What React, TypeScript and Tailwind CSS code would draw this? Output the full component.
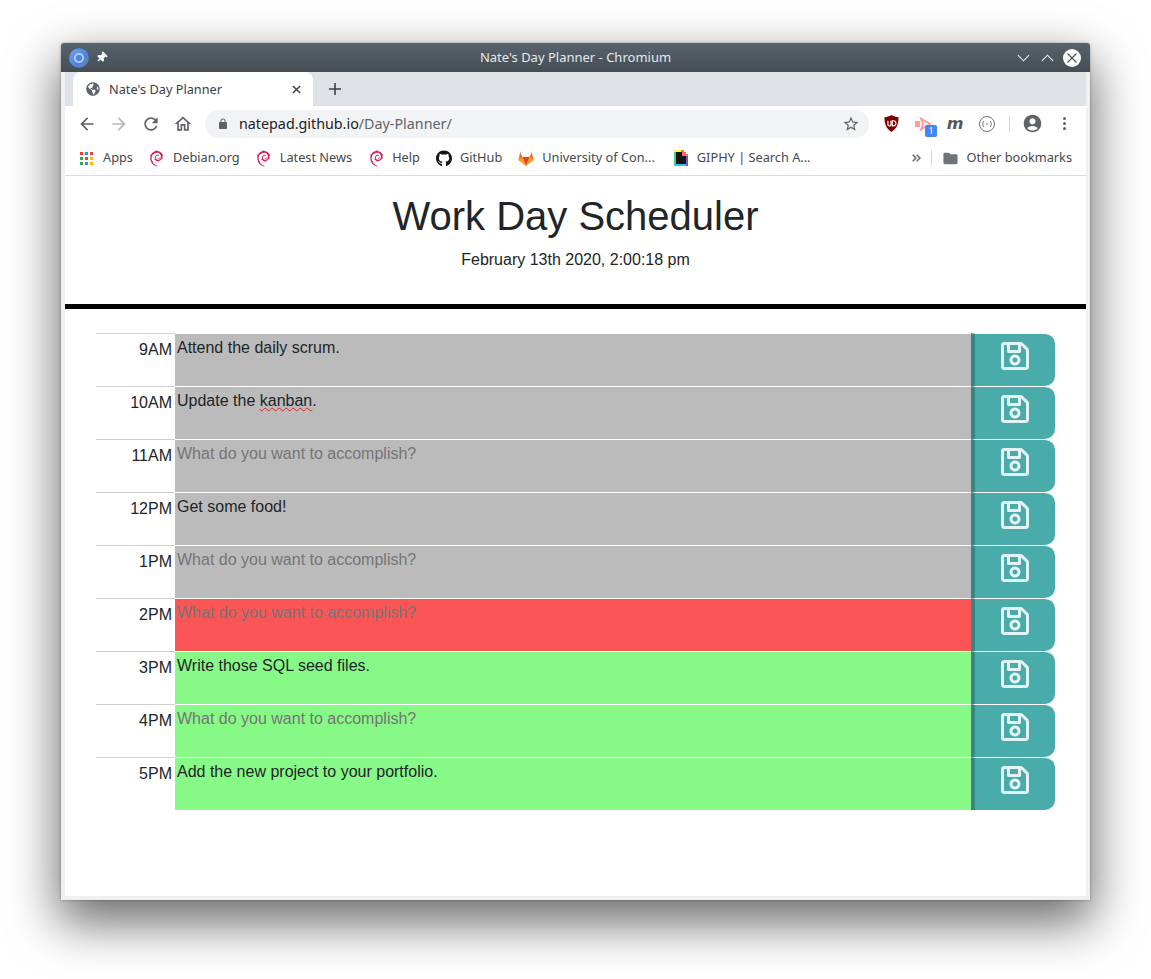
import { FaRegSave, FaGithub, FaGlobeAmericas, FaThumbtack } from "react-icons/fa"
import { MdAccountCircle, MdFolder } from "react-icons/md"
import { SiDebian } from "react-icons/si"

const rows = [
  { hour: "9AM", text: "Attend the daily scrum.", bg: "bg-[#bbbbbb]" },
  { hour: "10AM", text: "kanban", bg: "bg-[#bbbbbb]" },
  { hour: "11AM", bg: "bg-[#bbbbbb]" },
  { hour: "12PM", text: "Get some food!", bg: "bg-[#bbbbbb]" },
  { hour: "1PM", bg: "bg-[#bbbbbb]" },
  { hour: "2PM", bg: "bg-[#fc5555]" },
  { hour: "3PM", text: "Write those SQL seed files.", bg: "bg-[#86f986]" },
  { hour: "4PM", bg: "bg-[#86f986]" },
  { hour: "5PM", text: "Add the new project to your portfolio.", bg: "bg-[#86f986]" },
]

function Mat({ d, className }: { d: string; className: string }) {
  return (
    <svg viewBox="0 0 24 24" className={className} fill="currentColor">
      <path d={d} />
    </svg>
  )
}

function AppsGrid() {
  const colors = ["#ea4335", "#4285f4", "#ea4335", "#34a853", "#ea4335", "#fbbc04", "#34a853", "#4285f4", "#fbbc04"]
  return (
    <div className="grid w-[13px] grid-cols-3 gap-[2px]">
      {colors.map((c, i) => (
        <svg key={i} viewBox="0 0 3 3" className="h-[3px] w-[3px]">
          <rect width="3" height="3" fill={c} />
        </svg>
      ))}
    </div>
  )
}

function Chromium() {
  return (
    <svg viewBox="0 0 20 20" className="h-[20px] w-[20px]">
      <defs>
        <linearGradient id="chromium-rim" x1="0" y1="0" x2="1" y2="1">
          <stop offset="0" stopColor="#6fa4f7" />
          <stop offset="0.55" stopColor="#4f86e6" />
          <stop offset="1" stopColor="#6f7f96" />
        </linearGradient>
      </defs>
      <circle cx="10" cy="10" r="9.8" fill="url(#chromium-rim)" />
      <circle cx="10" cy="10" r="5" fill="#bcd2f7" />
      <circle cx="10" cy="10" r="3.3" fill="#4f86e6" />
    </svg>
  )
}

function Gitlab() {
  return (
    <svg viewBox="0 0 20 18" className="h-[17px] w-[18px]">
      <path d="M10 18 L0.6 11 L2.8 1 L5.6 7 H14.4 L17.2 1 L19.4 11 Z" fill="#fc6d26" />
      <path d="M10 18 L5.6 7 H14.4 Z" fill="#e24329" />
      <path d="M10 18 L0.6 11 L5.6 7 Z" fill="#fca326" />
      <path d="M10 18 L19.4 11 L14.4 7 Z" fill="#fca326" />
    </svg>
  )
}

function Giphy() {
  return (
    <svg viewBox="0 0 14 16" className="h-[16px] w-[14px]">
      <rect x="0" y="0" width="2" height="16" fill="#3fd28c" />
      <rect x="0" y="0" width="7" height="2" fill="#fff35c" />
      <rect x="0" y="14" width="14" height="2" fill="#2cc5ee" />
      <rect x="12" y="4" width="2" height="12" fill="#7d4fc4" />
      <path d="M7 0 h3 v2 h2 v2 h2 v2 h-7z" fill="#ff6666" />
      <path d="M2 2 h6 v4 h4 v8 H2z" fill="#141414" />
    </svg>
  )
}

function UBlock() {
  return (
    <svg viewBox="0 0 16 18" className="h-[17px] w-[15px]">
      <path d="M8 0 C5.5 1.5 3 2.2 0.5 2.4 C0.5 9 2 14.5 8 18 C14 14.5 15.5 9 15.5 2.4 C13 2.2 10.5 1.5 8 0Z" fill="#800000" />
      <path d="M4.2 6 v4 a1.6 1.6 0 0 0 3.2 0 v-4 M8.8 6 v5.5 h1.2 a2.7 2.7 0 0 0 0-5.5z" fill="none" stroke="#fff" strokeWidth="1.2" />
    </svg>
  )
}

function Bookmark({ icon, label }: { icon: React.ReactNode; label: string }) {
  return (
    <div className="flex items-center gap-[8px] whitespace-nowrap">
      <div className="flex w-[16px] justify-center">{icon}</div>
      <span>{label}</span>
    </div>
  )
}

export default function App() {
  const debian = <SiDebian className="h-[17px] w-[15px] text-[#cf0d4f]" stroke="currentColor" strokeWidth={0.7} />
  return (
    <div className="h-[979px] w-[1151px] overflow-hidden bg-white pl-[61px] pt-[43px]">
      <div className="flex h-[857px] w-[1029px] flex-col rounded-t-[3px] bg-[#eff0f1] shadow-[0_20px_50px_3px_rgba(0,0,0,0.58),0_0_3px_rgba(0,0,0,0.3)]">
        {/* Window title bar */}
        <div className="flex h-[29px] shrink-0 items-center rounded-t-[3px] bg-gradient-to-b from-[#59636c] to-[#444d54] pl-[8px] pr-[9px] font-['Noto_Sans',sans-serif] text-[13px] text-[#e6e8ea]">
          <Chromium />
          <FaThumbtack className="ml-[7px] h-[11px] w-[11px] rotate-45 text-white" />
          <div className="flex-1 pl-[27px] text-center">Nate's Day Planner - Chromium</div>
          <svg viewBox="0 0 14 8" className="mr-[11px] h-[8px] w-[13px]" fill="none" stroke="#eceef0" strokeWidth="1.2">
            <path d="M1 1 L7 7 L13 1" />
          </svg>
          <svg viewBox="0 0 14 8" className="mr-[9px] h-[8px] w-[13px]" fill="none" stroke="#eceef0" strokeWidth="1.2">
            <path d="M1 7 L7 1 L13 7" />
          </svg>
          <div className="flex h-[18px] w-[18px] items-center justify-center rounded-full bg-white">
            <svg viewBox="0 0 10 10" className="h-[10px] w-[10px]" fill="none" stroke="#454e55" strokeWidth="1.1">
              <path d="M0.5 0.5 L9.5 9.5 M9.5 0.5 L0.5 9.5" />
            </svg>
          </div>
        </div>

        {/* Browser */}
        <div className="mx-[4px] flex flex-1 flex-col bg-white font-['Noto_Sans',sans-serif] text-[12.75px] text-[#5f6368]">
          <div className="flex h-[34px] shrink-0 items-end bg-[#dee1e6] pl-[8px]">
            <div className="flex h-[34px] w-[240px] items-center rounded-t-[8px] bg-white pl-[13px] pr-[12px] text-[#3c4043]">
              <FaGlobeAmericas className="h-[14px] w-[14px] text-[#5f6368]" />
              <span className="ml-[9px] flex-1 pt-[1px]">Nate's Day Planner</span>
              <svg viewBox="0 0 10 10" className="h-[9px] w-[9px]" fill="none" stroke="#3c4043" strokeWidth="1.6">
                <path d="M1 1 L9 9 M9 1 L1 9" />
              </svg>
            </div>
            <svg viewBox="0 0 12 12" className="mb-[11px] ml-[16px] h-[12px] w-[12px]" fill="none" stroke="#3c4043" strokeWidth="1.6">
              <path d="M6 0 V12 M0 6 H12" />
            </svg>
          </div>

          <div className="flex h-[35px] shrink-0 items-center pl-[12px] text-[#5f6368]">
            <Mat className="h-[20px] w-[20px]" d="M20 11H7.83l5.59-5.59L12 4l-8 8 8 8 1.41-1.41L7.83 13H20v-2z" />
            <Mat className="ml-[12px] h-[20px] w-[20px] text-[#b5b8bc]" d="M12 4l-1.41 1.41L16.17 11H4v2h12.17l-5.58 5.59L12 20l8-8z" />
            <Mat className="ml-[12px] h-[20px] w-[20px]" d="M17.65 6.35C16.2 4.9 14.21 4 12 4c-4.42 0-7.99 3.58-7.99 8s3.57 8 7.99 8c3.73 0 6.84-2.55 7.73-6h-2.08c-.82 2.33-3.04 4-5.65 4-3.31 0-6-2.69-6-6s2.69-6 6-6c1.66 0 3.14.69 4.22 1.78L13 11h7V4l-2.35 2.35z" />
            <Mat className="ml-[12px] h-[20px] w-[20px]" d="M12 5.69l5 4.5V18h-2v-6H9v6H7v-7.81l5-4.5M12 3L2 12h3v8h6v-6h2v6h6v-8h3L12 3z" />
            <div className="ml-[12px] flex h-[28px] w-[664px] items-center rounded-full bg-[#f1f3f4] pl-[12px] pr-[9px]">
              <Mat className="h-[12px] w-[12px]" d="M18 8h-1V6c0-2.76-2.24-5-5-5S7 3.24 7 6v2H6c-1.1 0-2 .9-2 2v10c0 1.1.9 2 2 2h12c1.1 0 2-.9 2-2V10c0-1.1-.9-2-2-2zM9 6c0-1.66 1.34-3 3-3s3 1.34 3 3v2H9V6z" />
              <div className="ml-[10px] flex-1 text-[14.3px]">
                <span className="text-[#202124]">natepad.github.io</span>
                <span>/Day-Planner/</span>
              </div>
              <Mat className="h-[18px] w-[18px]" d="M22 9.24l-7.19-.62L12 2 9.19 8.63 2 9.24l5.46 4.73L5.82 21 12 17.27 18.18 21l-1.63-7.03L22 9.24zM12 15.4l-3.76 2.27 1-4.28-3.32-2.88 4.38-.38L12 6.1l1.71 4.04 4.38.38-3.32 2.88 1 4.28L12 15.4z" />
            </div>
            <div className="ml-[15px] flex w-[15px] justify-center">
              <UBlock />
            </div>
            <div className="relative ml-[16px] flex w-[16px] justify-center">
              <svg viewBox="0 0 16 14" className="h-[14px] w-[16px]">
                <path d="M6 1.5 L15 7 L6 12.5 L8 7 Z" fill="none" stroke="#ff9ca0" strokeWidth="2" />
                <rect x="0" y="4" width="5" height="6" fill="#ff9ca0" />
              </svg>
              <div className="absolute left-[10px] top-[8px] flex h-[12px] w-[12px] items-center justify-center rounded-[2px] bg-[#4285f4] text-[9px] leading-none text-white">
                1
              </div>
            </div>
            <div className="ml-[16px] flex w-[16px] justify-center font-['DejaVu_Sans',sans-serif] text-[16px] font-bold italic leading-none text-[#55585c]">
              m
            </div>
            <svg viewBox="0 0 16 16" className="ml-[16px] h-[16px] w-[16px]" fill="none" stroke="#4a4d51" strokeWidth="0.8">
              <circle cx="8" cy="8" r="7.5" />
              <path d="M5 5 C3.8 5 4.4 7.6 3.4 8 C4.4 8.4 3.8 11 5 11 M11 5 C12.2 5 11.6 7.6 12.6 8 C11.6 8.4 12.2 11 11 11 M6.8 8 H9.2" />
            </svg>
            <div className="ml-[14px] h-[16px] w-px bg-[#d5d7da]" />
            <MdAccountCircle className="ml-[12px] h-[21px] w-[21px]" />
            <div className="ml-[20px] flex flex-col gap-[2px]">
              <div className="h-[3px] w-[3px] rounded-full bg-[#5f6368]" />
              <div className="h-[3px] w-[3px] rounded-full bg-[#5f6368]" />
              <div className="h-[3px] w-[3px] rounded-full bg-[#5f6368]" />
            </div>
          </div>

          <div className="flex h-[35px] shrink-0 items-center border-b border-[#d9dbde] pl-[15px] pr-[14px] text-[#45494d]">
            <div className="flex items-center gap-[10px] whitespace-nowrap">
              <AppsGrid />
              <span>Apps</span>
            </div>
            <div className="ml-[16px] flex items-center gap-[16px]">
              <Bookmark icon={debian} label="Debian.org" />
              <Bookmark icon={debian} label="Latest News" />
              <Bookmark icon={debian} label="Help" />
              <Bookmark icon={<FaGithub className="h-[17px] w-[17px] text-[#161616]" />} label="GitHub" />
              <Bookmark icon={<Gitlab />} label="University of Con..." />
              <div className="ml-[2px]">
                <Bookmark icon={<Giphy />} label="GIPHY | Search A..." />
              </div>
            </div>
            <div className="flex-1" />
            <svg viewBox="0 0 9 8" className="h-[8px] w-[9px]" fill="none" stroke="#5f6368" strokeWidth="1.4">
              <path d="M0.7 0.7 L4 4 L0.7 7.3 M4.7 0.7 L8 4 L4.7 7.3" />
            </svg>
            <div className="mx-[10px] h-[16px] w-px bg-[#d5d7da]" />
            <MdFolder className="h-[17px] w-[17px] text-[#6f7377]" />
            <span className="ml-[7px] whitespace-nowrap">Other bookmarks</span>
          </div>

          {/* Page */}
          <div className="flex-1 font-['Liberation_Sans',sans-serif] text-[#212529]">
            <header className="flex h-[133px] flex-col items-center border-b-[5px] border-black pt-[16px]">
              <h1 className="text-[40px] font-normal leading-[48px]">Work Day Scheduler</h1>
              <p className="mt-[8px] text-[16px] leading-[24px]">February 13th 2020, 2:00:18 pm</p>
            </header>
            <div className="pl-[31px] pt-[24px]">
              {rows.map((r) => (
                <div key={r.hour} className="flex h-[53px] w-[959px]">
                  <div className="w-[79px] border-t border-[#cfcfcf] pr-[3px] pt-[6px] text-right text-[16px] leading-[19px]">
                    {r.hour}
                  </div>
                  <div className={`flex-1 border-t border-white pl-[2px] pt-[4px] text-[16px] leading-[19px] ${r.bg} ${r.text ? "text-[#212529]" : "text-[#757575]"}`}>
                    {r.text === "kanban" ? (
                      <>
                        Update the <span className="underline decoration-[#e02020] decoration-wavy decoration-1">kanban</span>.
                      </>
                    ) : (
                      (r.text ?? "What do you want to accomplish?")
                    )}
                  </div>
                  <div className="flex w-[84px] justify-center rounded-r-[10px] border-l-[4px] border-t border-l-[#398585] border-t-white bg-[#4aabab] pt-[6px] text-[#e4f3f3]">
                    <FaRegSave className="h-[32px] w-[28px]" />
                  </div>
                </div>
              ))}
            </div>
          </div>
        </div>
        <div className="h-[4px] shrink-0" />
      </div>
    </div>
  )
}
